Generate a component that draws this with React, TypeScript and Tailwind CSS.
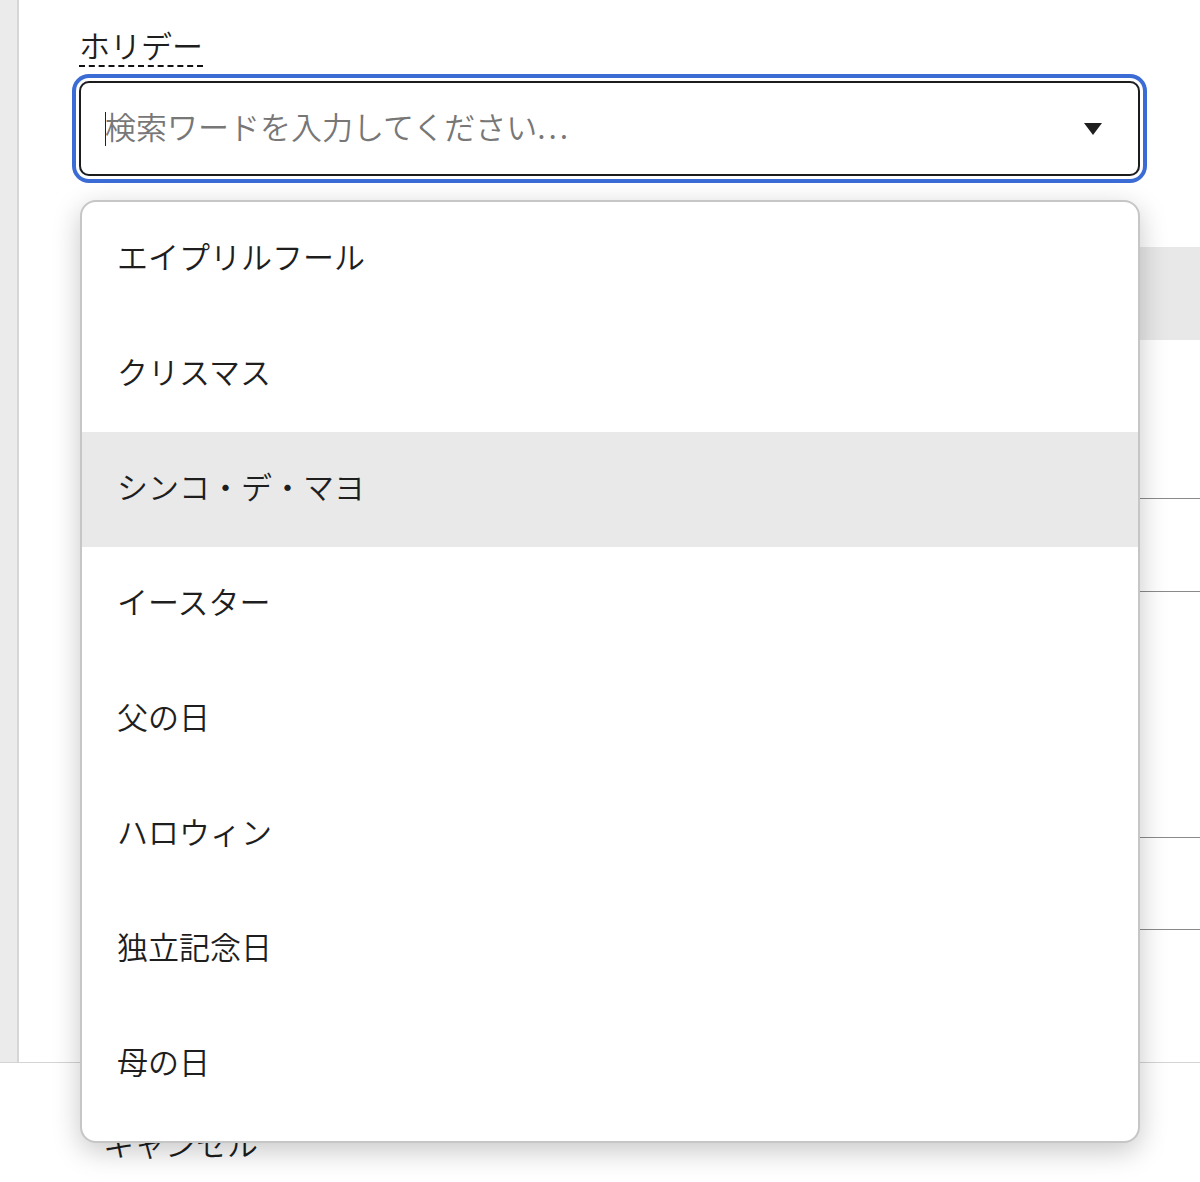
import { useState } from "react";

const holidays = [
  "エイプリルフール",
  "クリスマス",
  "シンコ・デ・マヨ",
  "イースター",
  "父の日",
  "ハロウィン",
  "独立記念日",
  "母の日",
];

const font = {
  fontFamily: '"Noto Sans CJK JP", "Noto Sans", sans-serif',
};

export default function App() {
  const [active] = useState(2);

  return (
    <div
      className="relative h-[1182px] w-[1200px] overflow-hidden bg-white text-[#1e1e1e]"
      style={font}
    >
      {/* modal body */}
      <div className="flex h-[1063px] border-b border-[#d4d4d4]">
        <div className="w-[19px] shrink-0 border-r-2 border-[#d6d6d6] bg-[#ebebeb]" />
        <div className="flex flex-1 flex-col">
          <div className="h-[247px] pl-[60px] pr-[60px] pt-[25px]">
            <span className="inline-block border-b-[2.5px] border-dashed border-[#111] text-[31px] font-[350] leading-[40px]">
              ホリデー
            </span>
            <div className="mt-[14px] flex h-[95px] items-center rounded-[10px] border-2 border-[#1c1c1c] pl-[24px] pr-[36px] shadow-[0_0_0_3px_#fff,0_0_0_7px_#3b6bd4]">
              <span className="-mr-px h-[34px] w-px bg-[#222]" />
              <span className="flex-1 pb-[6px] text-[31px] font-[350] leading-none text-[#777]">
                検索ワードを入力してください<span className="tracking-[3px]">...</span>
              </span>
              <svg width="18" height="12" viewBox="0 0 18 12">
                <polygon points="0,0 18,0 9,12" fill="#1f1f1f" />
              </svg>
            </div>
          </div>

          {/* rows behind the popup */}
          <div className="ml-[61px]">
            <div className="h-[93px] bg-[#e8e8e8]" />
            <div className="h-[158px]" />
            <div className="h-[94px] border-y border-[#8a8a8a]" />
            <div className="h-[245px]" />
            <div className="h-[93px] border-y border-[#8a8a8a]" />
          </div>
        </div>
      </div>

      <div className="pl-[103px] pt-[64px] text-[31px] font-[350] leading-none">キャンセル</div>

      {/* open holiday list */}
      <div className="absolute left-[80px] top-[200px] h-[943px] w-[1060px] overflow-hidden rounded-[16px] border-2 border-[#c6c6c6] bg-white shadow-[0_8px_28px_rgba(0,0,0,0.22)]">
        {holidays.map((h, i) => (
          <div
            key={h}
            className={
              i === active
                ? "flex h-[115px] items-center bg-[#e9e9e9] pb-[6px] pl-[35px] text-[31px] font-[350]"
                : "flex h-[115px] items-center pb-[6px] pl-[35px] text-[31px] font-[350]"
            }
          >
            {h}
          </div>
        ))}
      </div>
    </div>
  );
}
